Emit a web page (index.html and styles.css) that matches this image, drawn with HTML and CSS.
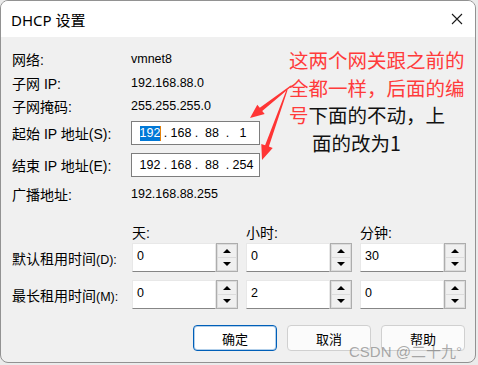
FILE: index.html
```html
<!DOCTYPE html>
<html lang="zh-CN">
<head>
    <meta charset="UTF-8">
    <title>DHCP 设置</title>
    <link rel="stylesheet" href="styles.css">
</head>
<body>
    <div class="window">
        <div class="titlebar">
            <span class="title">DHCP 设置</span>
            <svg class="close" width="12" height="12" viewBox="0 0 12 12"><path d="M1 1L11 11M11 1L1 11" stroke="#1a1a1a" stroke-width="1.1" fill="none"/></svg>
        </div>
        <div class="content">
            <div class="info">
                <span class="label">网络:</span><span class="value">vmnet8</span>
                <span class="label">子网 IP:</span><span class="value">192.168.88.0</span>
                <span class="label">子网掩码:</span><span class="value">255.255.255.0</span>
                <span class="label">起始 IP 地址(S):</span>
                <div class="ip">
                    <span><span class="sel">192</span></span><span>.</span><span>168</span><span>.</span><span>88</span><span>.</span><span>1</span>
                </div>
                <span class="label">结束 IP 地址(E):</span>
                <div class="ip">
                    <span>192</span><span>.</span><span>168</span><span>.</span><span>88</span><span>.</span><span>254</span>
                </div>
                <span class="label">广播地址:</span><span class="value">192.168.88.255</span>
            </div>

            <div class="lease-head">
                <span></span><span class="label">天:</span><span class="label">小时:</span><span class="label">分钟:</span>
            </div>
            <div class="lease-row">
                <span class="label">默认租用时间<span class="key">(D):</span></span>
                <div class="spin"><div class="spin-input">0</div><div class="spinner"><span class="spin-btn up"></span><span class="spin-btn down"></span></div></div>
                <div class="spin"><div class="spin-input">0</div><div class="spinner"><span class="spin-btn up"></span><span class="spin-btn down"></span></div></div>
                <div class="spin"><div class="spin-input">30</div><div class="spinner"><span class="spin-btn up"></span><span class="spin-btn down"></span></div></div>
            </div>
            <div class="lease-row second">
                <span class="label">最长租用时间<span class="key">(M):</span></span>
                <div class="spin"><div class="spin-input">0</div><div class="spinner"><span class="spin-btn up"></span><span class="spin-btn down"></span></div></div>
                <div class="spin"><div class="spin-input">2</div><div class="spinner"><span class="spin-btn up"></span><span class="spin-btn down"></span></div></div>
                <div class="spin"><div class="spin-input">0</div><div class="spinner"><span class="spin-btn up"></span><span class="spin-btn down"></span></div></div>
            </div>

            <div class="buttons">
                <button class="btn primary">确定</button>
                <button class="btn">取消</button>
                <button class="btn">帮助</button>
            </div>
        </div>
    </div>

    <!-- annotation drawn over the screenshot -->
    <svg class="arrows" width="478" height="365" viewBox="0 0 478 365">
        <polygon fill="#ff3535" points="291.3,86.4 262.2,111 264.7,114.1 250,118 257.3,104.7 259.8,107.8 290.7,85.6"/>
        <polygon fill="#ff3535" points="287.5,90.2 268.9,146.6 272.7,147.9 262,160 261.3,143.9 265.1,145.2 286.5,89.8"/>
    </svg>
    <div class="note">
        <div>这两个网关跟之前的</div>
        <div>全都一样，后面的编</div>
        <div>号<span class="note-black">下面的不动，上</span></div>
        <div class="note-black indent">面的改为1</div>
    </div>
    <div class="watermark">CSDN @二十九°</div>
</body>
</html>
```

FILE: styles.css
```css
body {
    margin: 0;
    position: relative;
    width: 478px;
    height: 365px;
    background: #ebebeb;
    font-family: "Liberation Sans", "Noto Sans CJK SC", sans-serif;
    color: #000;
}
.window {
    width: 476px;
    height: 363px;
    box-sizing: border-box;
    border: 1px solid #929292;
    border-radius: 8px;
    overflow: hidden;
    background: #f0f0f0;
}
.titlebar {
    height: 36px;
    background: #fff;
    display: flex;
    align-items: center;
    justify-content: space-between;
    padding: 0 12px 0 10px;
}
.title {
    font-family: "Noto Sans", "Noto Sans CJK SC", sans-serif;
    font-size: 15px;
}
.content {
    padding: 10px 10px 0 11px;
}
.info {
    display: grid;
    grid-template-columns: 119px auto;
    grid-template-rows: 24px 23px 23px 32px 32px 26px;
    align-items: center;
    justify-items: start;
}
.label {
    font-size: 14px;
    white-space: nowrap;
}
.key {
    font-size: 12.5px;
}
.value {
    font-size: 12.5px;
}
.ip {
    width: 129px;
    height: 24px;
    box-sizing: border-box;
    border: 1px solid #7d7d7d;
    background: #fff;
    display: grid;
    grid-template-columns: 22px 9px 22px 9px 22px 9px 22px;
    padding-left: 7px;
    align-items: center;
    text-align: center;
    font-size: 12.5px;
}
.sel {
    display: inline-block;
    line-height: 15px;
    background: #0078d7;
    color: #fff;
    box-shadow: 1px 0 0 #e2800a;
}
.lease-head,
.lease-row {
    display: grid;
    grid-template-columns: 112px 106px 106px 106px;
    column-gap: 8px;
    align-items: center;
}
.lease-head {
    height: 23px;
    margin-top: 13px;
}
.lease-row {
    height: 29px;
}
.lease-row.second {
    margin-top: 8px;
}
.spin {
    display: flex;
    height: 29px;
}
.spin-input {
    width: 84px;
    box-sizing: border-box;
    background: #fff;
    border: 1px solid #e8e8e8;
    border-bottom-color: #868686;
    font-size: 12.5px;
    padding: 5px 0 0 4px;
}
.spinner {
    width: 22px;
    box-sizing: border-box;
    border: 1px solid #adadad;
    background: #dcdcdc;
    display: flex;
    flex-direction: column;
    gap: 1px;
    padding: 1px;
}
.spin-btn {
    flex: 1;
    display: flex;
    align-items: center;
    justify-content: center;
    background: #f0f0f0;
}
.up::before {
    content: "";
    border-left: 4px solid transparent;
    border-right: 4px solid transparent;
    border-bottom: 4px solid #000;
}
.down::before {
    content: "";
    border-left: 4px solid transparent;
    border-right: 4px solid transparent;
    border-top: 4px solid #000;
}
.buttons {
    display: flex;
    justify-content: flex-end;
    gap: 10px;
    margin-top: 16px;
}
.btn {
    width: 84px;
    height: 26px;
    border: 1px solid #d0d0d0;
    border-radius: 4px;
    background: #fbfbfb;
    font-family: "Liberation Sans", "Noto Sans CJK SC", sans-serif;
    font-size: 13px;
    color: #000;
    padding: 0;
}
.btn.primary {
    border-color: #005fb8;
    box-shadow: inset 0 0 0 1px rgba(0, 95, 184, 0.3);
    background: #fff;
}
.arrows {
    position: absolute;
    left: 0;
    top: 0;
    pointer-events: none;
}
.note {
    position: absolute;
    left: 289px;
    top: 46px;
    font-family: "Noto Sans CJK SC", sans-serif;
    font-size: 19.5px;
    line-height: 27.5px;
    color: #ff3b3b;
}
.note-black {
    color: #111;
}
.indent {
    padding-left: 23px;
}
.watermark {
    position: absolute;
    left: 349px;
    top: 340px;
    font-size: 15px;
    color: rgba(115, 115, 115, 0.6);
}
```
